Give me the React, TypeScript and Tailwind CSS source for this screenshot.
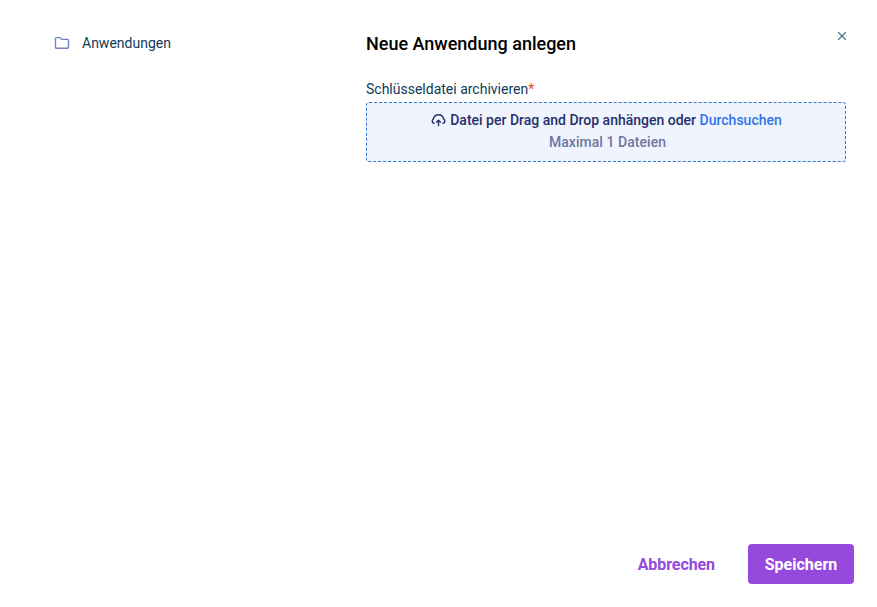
import { X } from "lucide-react";

function FolderIcon() {
  return (
    <svg width="16" height="16" viewBox="0 0 16 16" fill="none" stroke="#6f86bd" strokeWidth="1.4" strokeLinejoin="round">
      <path d="M1.5 3.6a1 1 0 0 1 1-1h3.6l1.5 1.8h5.9a1 1 0 0 1 1 1v6.9a1 1 0 0 1-1 1H2.5a1 1 0 0 1-1-1z" />
    </svg>
  );
}

function UploadIcon() {
  return (
    <svg width="15" height="15" viewBox="0 0 15 15" fill="none" stroke="#25306a" strokeWidth="1.4">
      <path d="M3.6 10.4H2.9A2.5 2.5 0 0 1 2.4 5.9 5.2 5.2 0 0 1 12.6 5.9 2.5 2.5 0 0 1 12.1 10.4H11.4" />
      <path d="M7.5 13.2V7.5" />
      <path d="M5.2 9.6 7.5 7.2 9.8 9.6" strokeLinejoin="round" />
    </svg>
  );
}

export default function App() {
  return (
    <div className="flex h-[607px] w-[877px] flex-col bg-white font-['Roboto',sans-serif]">
      <div className="flex flex-1">
        <aside className="w-[366px] shrink-0 pl-[54px] pt-[35px]">
          <div className="flex h-4 items-center gap-[12px] text-sm text-[#0f3a55]">
            <FolderIcon />
            <span>Anwendungen</span>
          </div>
        </aside>
        <main className="w-[480px] pt-[32px]">
          <h1 className="text-lg leading-6 font-medium text-black">Neue Anwendung anlegen</h1>
          <label className="mt-[23px] block text-sm leading-[20px] text-[#0f3a55]">
            Schlüsseldatei archivieren<span className="text-[#f04a23]">*</span>
          </label>
          <div className="mt-[3px] flex h-[60px] flex-col items-center gap-[2px] rounded-[3px] border border-dashed border-[#2f74e8] bg-[#f0f4fe] pt-[7px] text-sm font-medium">
            <div className="flex items-center gap-[4px] pl-[1px] leading-[20px] text-[#25306a]">
              <UploadIcon />
              <span>
                Datei per Drag and Drop anhängen oder <span className="text-[#2f74e8]">Durchsuchen</span>
              </span>
            </div>
            <div className="pl-[3px] leading-[20px] tracking-[0.05px] text-[#6f76a0]">Maximal 1 Dateien</div>
          </div>
        </main>
        <div className="pt-[29px]">
          <X size={14} className="-ml-[11px] text-[#4d7488]" />
        </div>
      </div>
      <footer className="flex items-center justify-end gap-[33px] pb-[23px] pr-[23px]">
        <button className="pt-[2px] text-base font-bold tracking-[-0.08px] text-[#9549dd]">Abbrechen</button>
        <button className="h-10 w-[106px] rounded-[4px] bg-[#9549dd] pt-[2px] text-base font-bold text-white">Speichern</button>
      </footer>
    </div>
  );
}
